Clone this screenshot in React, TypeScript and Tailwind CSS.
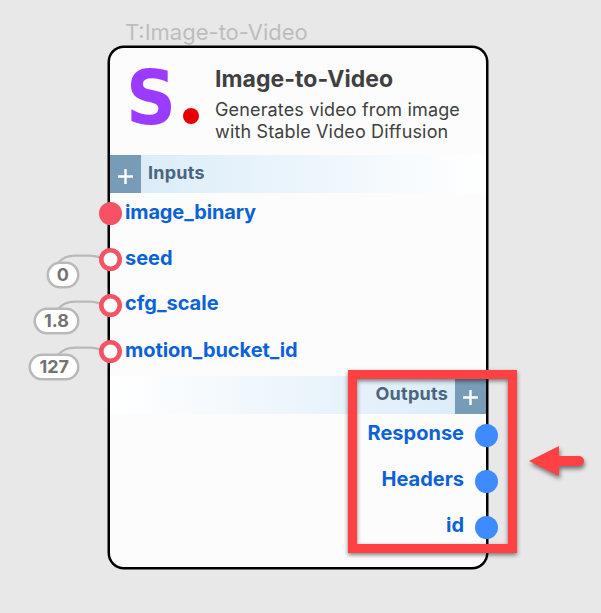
import React from "react";

type Input = { name: string; value?: string; row: string; label: string };

const inputs: Input[] = [
  { name: "image_binary", row: "h-[46px]", label: "tracking-[-0.14px]" },
  { name: "seed", value: "0", row: "h-[46px]", label: "" },
  { name: "cfg_scale", value: "1.8", row: "h-[46px]", label: "relative -top-px" },
  { name: "motion_bucket_id", value: "127", row: "h-[46px]", label: "tracking-[-0.04px]" },
];

const outputs = ["Response", "Headers", "id"];

function PlusButton() {
  return (
    <button className="flex h-full w-[31px] shrink-0 items-center justify-center bg-[#789bb7] pt-1" aria-label="Add">
      <svg width="15" height="15" viewBox="0 0 15 15">
        <path d="M7.5 0V15M0 7.5H15" stroke="white" strokeWidth="2.4" />
      </svg>
    </button>
  );
}

function InputRow({ item }: { item: Input }) {
  return (
    <div className={`relative pl-[15px] ${item.row}`}>
      {item.value && (
        <>
          <svg className="absolute -left-[60px] top-0 overflow-visible" width="60" height="46">
            <path d="M7.5 17.5C12 12 17 9.6 25 9.6H39C45 9.6 49 10.5 54 13.5" fill="none" stroke="#b9b9b9" strokeWidth="2.2" />
          </svg>
          <span className="absolute right-[407px] top-[15.5px] flex h-[26px] min-w-[31px] items-center justify-center rounded-full border-2 border-[#b9b9b9] bg-white px-[8px] text-[18px] leading-none font-bold text-[#737373] shadow-[0_0_0_0.5px_#b9b9b9]">
            {item.value}
          </span>
        </>
      )}
      <svg className="absolute -left-[11px] top-[2px]" width="23" height="23">
        <circle cx="11.5" cy="11.5" r={item.value ? 9.2 : 11.5} fill={item.value ? "white" : "#f55265"} stroke={item.value ? "#f55265" : "none"} strokeWidth="4.6" />
      </svg>
      <span className={`block text-[20px] leading-6 font-bold text-[#0b62d8] ${item.label}`}>{item.name}</span>
    </div>
  );
}

export default function App() {
  return (
    <div className="relative h-[613px] w-[601px] overflow-hidden bg-[#e8e8e8] pt-[18px] font-['Inter',sans-serif]">
      <div className="h-[28px] pl-[125px] text-[22px] leading-[28px] text-[#bdbdbd]">T:Image-to-Video</div>

      <section className="ml-[108px] h-[523px] w-[380px] rounded-[16px] border-2 border-black bg-[#fcfcfc] shadow-[0_0_0_0.5px_#000]">
        <header className="flex h-[107px]">
          <div className="flex w-[105px] pl-[16px] pt-[12px]">
            <span className="mt-px w-[55px] origin-left scale-x-[1.03] font-['DejaVu_Sans_Condensed','DejaVu_Sans'] text-[75px] leading-[75px] font-bold text-[#9b3bff]">
              S
            </span>
            <span className="mt-[48px] ml-[2px] size-4 shrink-0 rounded-full bg-[#e80000]" />
          </div>
          <div className="whitespace-nowrap pt-[16px]">
            <h1 className="text-[23px] leading-[30px] font-bold tracking-[0.05px] text-[#404040]">Image-to-Video</h1>
            <p className="pt-[5px] text-[18px] leading-[22px] tracking-[0.15px] text-[#404040]">
              Generates video from image
              <br />
              with Stable Video Diffusion
            </p>
          </div>
        </header>

        <div className="flex h-[38px] bg-linear-to-r from-[#d8ebf8] to-white">
          <PlusButton />
          <span className="pl-[7px] pt-[6px] text-[18px] leading-6 font-bold tracking-[0.25px] text-[#4b6580]">Inputs</span>
        </div>
        <div className="h-[183px] pt-[7px]">
          {inputs.map((item) => (
            <InputRow key={item.name} item={item} />
          ))}
        </div>

        <div className="flex h-[38px] justify-end bg-linear-to-l from-[#d8ebf8] to-white">
          <span className="pr-[7px] pt-[6px] text-[18px] leading-6 font-bold tracking-[0.25px] text-[#4b6580]">Outputs</span>
          <PlusButton />
        </div>
        <div className="pt-[7px]">
          {outputs.map((name) => (
            <div key={name} className="relative h-[46px] pr-[22px] text-right text-[20px] leading-6 font-bold text-[#0b62d8]">
              {name}
              <span className="absolute -right-[12px] top-[2.5px] size-[23px] rounded-full bg-[#3d8bfd]" />
            </div>
          ))}
        </div>
      </section>

      <div className="absolute left-[348px] top-[370px] h-[183px] w-[169px] border-[9px] border-[#ff4144] [filter:drop-shadow(0_2px_2px_rgba(0,0,0,0.5))]" />
      <svg
        className="absolute left-[529px] top-[445px] overflow-visible [filter:drop-shadow(1px_3px_2px_rgba(0,0,0,0.5))]"
        width="56"
        height="32"
        viewBox="0 0 56 32"
      >
        <path d="M0 16L30 1V11H50A5 5 0 0 1 50 21H30V31Z" fill="#ff4144" />
      </svg>
    </div>
  );
}
